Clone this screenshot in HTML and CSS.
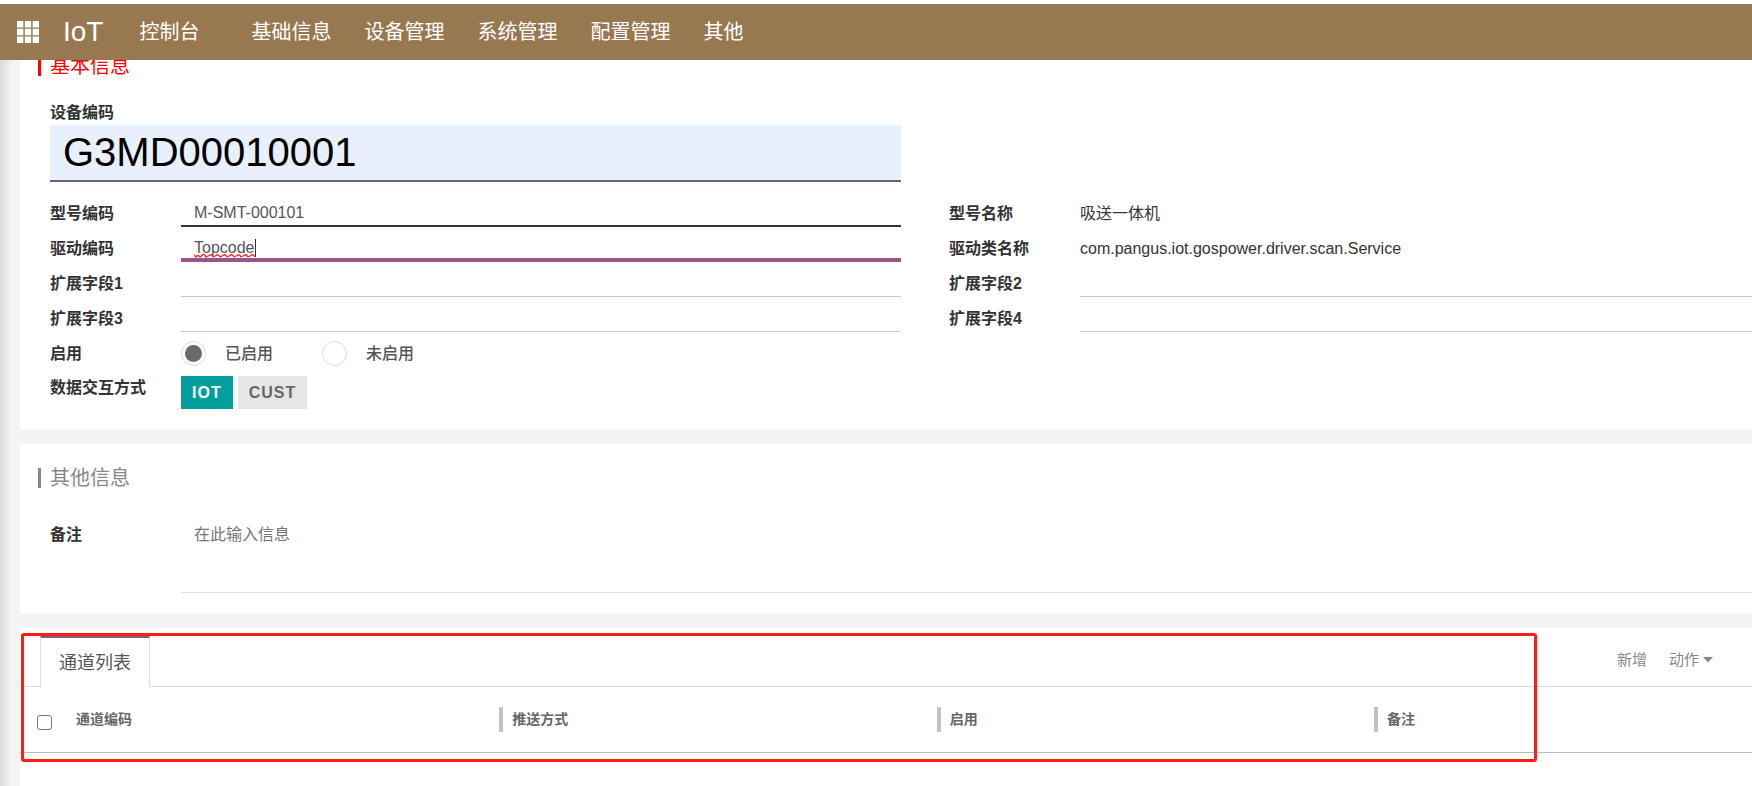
FILE: index.html
```html
<!DOCTYPE html>
<html lang="zh-CN">
<head>
<meta charset="utf-8">
<title>IoT</title>
<link rel="stylesheet" href="styles.css">
</head>
<body>
<header class="navbar">
  <button class="apps" type="button" aria-label="应用">
    <svg width="22" height="22" viewBox="0 0 22 22" fill="#fff" aria-hidden="true">
      <path d="M0 0h6.4v6.4H0zM7.8 0h6.4v6.4H7.8zM15.6 0H22v6.4h-6.4zM0 7.8h6.4v6.4H0zM7.8 7.8h6.4v6.4H7.8zM15.6 7.8H22v6.4h-6.4zM0 15.6h6.4V22H0zM7.8 15.6h6.4V22H7.8zM15.6 15.6H22V22h-6.4z"/>
    </svg>
  </button>
  <a class="brand" href="#">IoT</a>
  <nav class="menu">
    <a class="menu-home" href="#">控制台</a>
    <a href="#">基础信息</a>
    <a href="#">设备管理</a>
    <a href="#">系统管理</a>
    <a href="#">配置管理</a>
    <a href="#">其他</a>
  </nav>
</header>

<main class="page">
  <section class="card">
    <h2 class="section-title section-title-active">基本信息</h2>
    <div class="code-field">
      <label for="device-code">设备编码</label>
      <input id="device-code" type="text" value="G3MD00010001">
    </div>
    <div class="columns">
      <div class="column">
        <div class="row">
          <label for="model-code">型号编码</label>
          <input class="control control-required" id="model-code" type="text" value="M-SMT-000101">
        </div>
        <div class="row">
          <label for="driver-code">驱动编码</label>
          <div class="editing">
            <input class="control control-focused" id="driver-code" type="text" value="Topcode">
            <svg class="edit-marks" width="64" height="20" viewBox="0 0 64 20" fill="none" aria-hidden="true">
              <path d="M0 16l2 2q2-3 4 0l2-1.5q2-3 4 1.5l3-1.5q2-2 4 1.5l3-1.5q2-2 4 1.5l3-1.5q2-2 4 1.5l3-1.5q2-2 4 1.5l3-1.5q2-2 4 1.5l3-1.5q2-2 4 1.5l3-1.5q2-2 4 1.5" stroke="#f22" stroke-width="1.3"/>
              <path d="M61.5 0v18" stroke="#333"/>
            </svg>
          </div>
        </div>
        <div class="row">
          <label for="ext1">扩展字段1</label>
          <input class="control" id="ext1" type="text">
        </div>
        <div class="row">
          <label for="ext3">扩展字段3</label>
          <input class="control" id="ext3" type="text">
        </div>
        <div class="row">
          <span class="row-label">启用</span>
          <div class="radios">
            <label class="radio"><input type="radio" name="enabled" checked>已启用</label>
            <label class="radio"><input type="radio" name="enabled">未启用</label>
          </div>
        </div>
        <div class="row">
          <span class="row-label row-label-buttons">数据交互方式</span>
          <div class="modes">
            <button class="mode mode-active" type="button">IOT</button>
            <button class="mode" type="button">CUST</button>
          </div>
        </div>
      </div>
      <div class="column column-right">
        <div class="row">
          <span class="row-label">型号名称</span>
          <span class="value">吸送一体机</span>
        </div>
        <div class="row">
          <span class="row-label">驱动类名称</span>
          <span class="value">com.pangus.iot.gospower.driver.scan.Service</span>
        </div>
        <div class="row">
          <label for="ext2">扩展字段2</label>
          <input class="control" id="ext2" type="text">
        </div>
        <div class="row">
          <label for="ext4">扩展字段4</label>
          <input class="control" id="ext4" type="text">
        </div>
      </div>
    </div>
  </section>

  <section class="card">
    <h2 class="section-title">其他信息</h2>
    <div class="row row-notes">
      <label for="notes">备注</label>
      <textarea class="notes" id="notes" placeholder="在此输入信息"></textarea>
    </div>
  </section>

  <section class="card card-list">
    <div class="tabs">
      <button class="tab" type="button">通道列表</button>
      <div class="actions">
        <button class="action" type="button">新增</button>
        <button class="action" type="button">动作<svg width="10" height="6" viewBox="0 0 10 6" fill="#888" aria-hidden="true"><path d="M0 0h10L5 5.5z"/></svg></button>
      </div>
    </div>
    <table class="channels">
      <thead>
        <tr>
          <th class="pick"><input type="checkbox" aria-label="全选"></th>
          <th class="col"><span class="head head-first">通道编码</span></th>
          <th class="col"><span class="head">推送方式</span></th>
          <th class="col"><span class="head">启用</span></th>
          <th><span class="head">备注</span></th>
        </tr>
      </thead>
    </table>
    <div class="highlight"></div>
  </section>
</main>
</body>
</html>
```
FILE: styles.css
```css
* {
  box-sizing: border-box;
}

body {
  margin: 0;
  padding-top: 4px;
  min-height: 100vh;
  display: flex;
  flex-direction: column;
  overflow: hidden;
  background: #fff;
  color: #333;
  font: 16px/24px "Liberation Sans", Arial, "Noto Sans CJK SC", sans-serif;
}

input,
textarea,
button {
  font: inherit;
  color: inherit;
  margin: 0;
  border: 0;
  border-radius: 0;
  background: none;
  outline: none;
}

.navbar {
  position: relative;
  z-index: 2;
  display: flex;
  align-items: center;
  height: 56px;
  flex: none;
  padding-left: 17px;
  background: #987850;
  color: #fff;
}

.navbar a {
  color: inherit;
  text-decoration: none;
}

.apps {
  display: flex;
  padding: 0;
}

.brand {
  margin: 0 36px 0 24px;
  font-size: 28px;
}

.menu {
  display: flex;
  gap: 33px;
  font-size: 20px;
}

.menu-home {
  margin-right: 19px;
}

.page {
  flex: 1;
  display: flex;
  flex-direction: column;
  gap: 15px;
  margin-top: -28px;
  padding-left: 20px;
  background: linear-gradient(to right, #dadada, #f4f4f4 12px);
}

.card {
  padding: 24px 0 20px 30px;
  background: #fff;
}

.section-title {
  margin: 0 0 25px -12px;
  padding-left: 9px;
  border-left: 3px solid #888;
  color: #888;
  font-size: 20px;
  line-height: 20px;
  font-weight: 400;
}

.section-title-active {
  border-color: #f00;
  color: #f00;
}

.code-field {
  width: 50%;
  margin-bottom: 14px;
}

.code-field label {
  display: block;
  font-weight: 700;
}

.code-field input {
  display: block;
  width: 100%;
  height: 57px;
  padding: 0 13px;
  border-bottom: 2px solid #666;
  background: #e8effd;
  color: #000;
  font-size: 40px;
}

.columns {
  display: grid;
  grid-template-columns: 1fr 1fr;
}

.column-right {
  padding-left: 48px;
}

.row {
  display: grid;
  grid-template-columns: 131px 1fr;
  min-height: 35px;
  align-items: start;
}

.row > label,
.row-label {
  font-weight: 700;
  line-height: 35px;
}

.row > .row-label-buttons {
  line-height: 33px;
}

.control {
  display: block;
  width: 100%;
  height: 31px;
  padding: 4px 13px 0;
  border-bottom: 1px solid #c8c8c8;
  color: #555;
}

.control-required {
  padding-top: 5px;
  border-bottom: 2px solid #333;
}

.control-focused {
  padding-top: 7px;
  border-bottom: 4px solid #9d5589;
}

.editing {
  position: relative;
}

.edit-marks {
  position: absolute;
  left: 13px;
  top: 8px;
}

.value {
  line-height: 35px;
}

.radios {
  display: flex;
  gap: 49px;
}

.radio {
  display: flex;
  align-items: center;
  gap: 19px;
  height: 35px;
  color: #555;
  font-weight: 500;
}

.radio input {
  appearance: none;
  width: 25px;
  height: 25px;
  padding: 3px;
  border: 1px solid #ddd;
  border-radius: 50%;
}

.radio input:checked {
  background: #6a6a6a content-box;
}

.modes {
  display: flex;
  gap: 5px;
  padding-top: 5px;
}

.mode {
  height: 33px;
  padding: 0 11px;
  background: #e6e6e6;
  color: #666;
  font-weight: 700;
  letter-spacing: 1px;
}

.mode-active {
  background: #009f9d;
  color: #fff;
}

.row-notes {
  margin-top: 29px;
}

.notes {
  display: block;
  width: 100%;
  height: 76px;
  padding: 6px 13px;
  border-bottom: 1px solid #ddd;
  resize: none;
}

.notes::placeholder {
  color: #757575;
}

.card-list {
  position: relative;
  flex: 1;
  padding: 0;
}

.tabs {
  display: flex;
  justify-content: space-between;
  align-items: flex-end;
  height: 59px;
  padding: 0 39px 0 20px;
  box-shadow: inset 0 -1px #ddd;
}

.tab {
  height: 52px;
  padding: 0 18px;
  border: 1px solid #ddd;
  border-width: 3px 1px 0;
  border-top-color: #875a7b;
  background: #fff;
  color: #555;
  font-size: 18px;
}

.actions {
  display: flex;
  gap: 22px;
  align-self: center;
}

.action {
  display: flex;
  align-items: center;
  gap: 4px;
  padding: 4px 0 0;
  color: #888;
  font-size: 15px;
}

.channels {
  width: 100%;
  table-layout: fixed;
  border-collapse: separate;
  border-spacing: 0;
}

.channels th {
  height: 66px;
  padding: 0;
  border-bottom: 1px solid #bbb;
  text-align: left;
  font-size: 14px;
  font-weight: 700;
  color: #666;
}

.channels .pick {
  width: 42px;
  padding: 5px 0 0 17px;
}

.channels .col {
  width: 25.25%;
}

.pick input {
  display: block;
  appearance: none;
  width: 15px;
  height: 15px;
  border: 1px solid #767676;
  border-radius: 3px;
}

.head {
  display: block;
  padding-left: 9px;
  border-left: 4px solid #c1c1c1;
  line-height: 25px;
}

.head-first {
  padding-left: 14px;
  border-left: 0;
}

.highlight {
  position: absolute;
  top: 5px;
  left: 1px;
  right: 215px;
  height: 129px;
  border: 3px solid #ff1e14;
  border-radius: 3px;
  pointer-events: none;
}
```
